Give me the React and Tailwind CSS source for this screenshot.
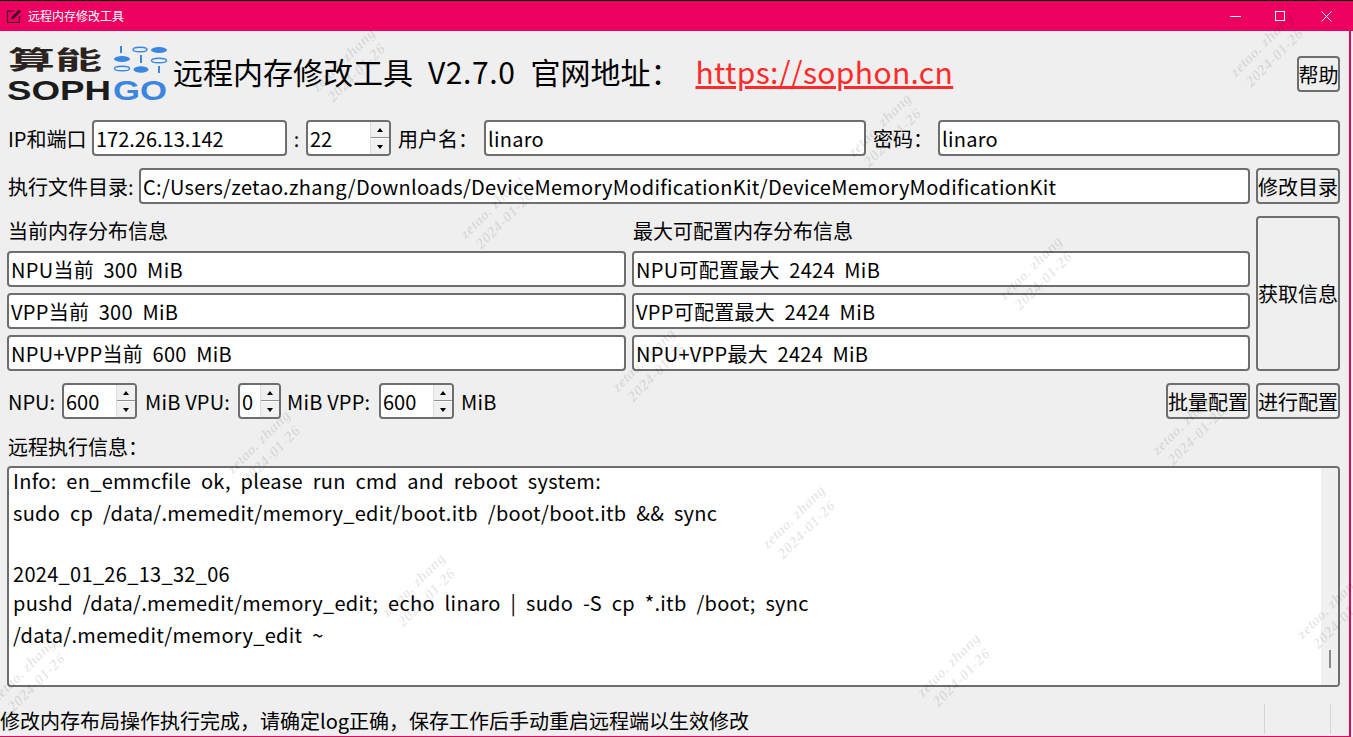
const font = { fontFamily: '"Noto Sans CJK SC", "Noto Sans", sans-serif' };
const logoFont = { fontFamily: '"Liberation Sans", sans-serif' };

const marks = [
  [350, 65], [886, 130], [1268, 50], [498, 212], [1037, 273], [650, 365], [265, 447],
  [1190, 428], [800, 522], [420, 590], [1335, 612], [955, 670], [30, 675],
];

function Watermark({ x, y }) {
  return (
    <div
      className="absolute pointer-events-none w-[100px] -rotate-45 text-center text-[15px] leading-[18px] tracking-[0.5px] font-bold italic text-black/[0.1] whitespace-nowrap"
      style={{ left: x - 50, top: y - 18, fontFamily: '"Liberation Serif", serif' }}
    >
      <div>zetao. zhang</div>
      <div>2024-01-26</div>
    </div>
  );
}

function Field({ children, className = "" }) {
  return (
    <div className={`h-[36px] flex items-center bg-white border-2 border-[#6e6e6e] rounded-[4px] pl-[2px] pt-[2px] text-[20px] whitespace-pre overflow-hidden ${className}`}>
      {children}
    </div>
  );
}

function Btn({ children, className = "" }) {
  return (
    <button className={`h-[36px] flex items-center justify-center bg-[#efefef] border-2 border-[#6e6e6e] rounded-[4px] pt-[1px] text-[20px] whitespace-nowrap ${className}`}>
      {children}
    </button>
  );
}

function Spin({ value, className = "" }) {
  return (
    <div className={`h-[36px] flex bg-white border-2 border-[#6e6e6e] rounded-[4px] text-[20px] overflow-hidden ${className}`}>
      <div className="flex-1 flex items-center pl-[2px] pt-[2px]">{value}</div>
      <div className="w-[19px] flex flex-col bg-[#f0f0f0] border-l border-[#dcdcdc]">
        <div className="flex-1 flex items-center justify-center border-b border-[#8f8f8f]">
          <div className="w-0 h-0 border-x-[3.5px] border-x-transparent border-b-[4px] border-b-black" />
        </div>
        <div className="flex-1 flex items-center justify-center border-t border-white">
          <div className="w-0 h-0 border-x-[3.5px] border-x-transparent border-t-[4px] border-t-black" />
        </div>
      </div>
    </div>
  );
}

function Logo() {
  return (
    <svg width="162" height="60" viewBox="0 0 162 60" className="shrink-0">
      <text x="1" y="24" fontSize="25" fontWeight="700" fill="#2a2320" textLength="94" lengthAdjust="spacingAndGlyphs" style={font}>算能</text>
      <g fill="#3b87e0">
        <rect x="113" y="1" width="2" height="7" />
        <ellipse cx="133" cy="4.5" rx="7" ry="2.3" fill="none" stroke="#3b87e0" strokeWidth="1.5" />
        <ellipse cx="152" cy="5" rx="8" ry="3" />
        <ellipse cx="115" cy="14" rx="8" ry="3" />
        <rect x="133" y="10" width="2" height="8" />
        <ellipse cx="152" cy="15.5" rx="7.5" ry="2.3" fill="none" stroke="#3b87e0" strokeWidth="1.5" />
        <ellipse cx="115" cy="23.5" rx="7.5" ry="2.3" fill="none" stroke="#3b87e0" strokeWidth="1.5" />
        <ellipse cx="134" cy="24.5" rx="7.5" ry="3.2" />
        <rect x="151" y="21" width="2" height="7" />
      </g>
      <text x="0" y="55" fontSize="28" fontWeight="700" fill="#1b1b1b" textLength="104" lengthAdjust="spacingAndGlyphs" style={logoFont}>SOPH</text>
      <text x="106" y="55" fontSize="28" fontWeight="700" fill="#3b87e0" textLength="54" lengthAdjust="spacingAndGlyphs" style={logoFont}>GO</text>
    </svg>
  );
}

export default function App() {
  return (
    <div className="relative w-[1353px] h-[737px] flex flex-col overflow-hidden bg-[#efefef] text-black border-t border-t-black" style={font}>
      <div className="h-[30px] shrink-0 flex items-center bg-[#ec0060] text-white text-[12px]">
        <svg width="16" height="16" viewBox="0 0 16 16" fill="none" className="ml-[6px] mr-[6px]">
          <path d="M13.5 8v5.5a1 1 0 0 1-1 1H2.5a1 1 0 0 1-1-1V4a1 1 0 0 1 1-1H8" stroke="#3a0a20" strokeWidth="1.2" />
          <path d="M5 11.5l1-3L13 1.5l2 2-7 7z" fill="#3a0a20" />
        </svg>
        <span>远程内存修改工具</span>
        <div className="ml-auto flex items-center">
          <svg width="11" height="11" viewBox="0 0 11 11" className="mr-[34px]" shapeRendering="crispEdges">
            <rect x="0" y="5" width="11" height="1" fill="#fff" />
          </svg>
          <svg width="11" height="11" viewBox="0 0 11 11" className="mr-[35px]" shapeRendering="crispEdges">
            <rect x="0.5" y="0.5" width="9" height="9" fill="none" stroke="#fff" />
          </svg>
          <svg width="11" height="11" viewBox="0 0 11 11" className="mr-[21px]">
            <path d="M0.5 0.5l10 10M10.5 0.5l-10 10" stroke="#fff" strokeWidth="1" />
          </svg>
        </div>
      </div>

      <div className="flex-1 flex flex-col w-[1351px] border-r-2 border-r-[#ec0060] border-b border-b-[#ec0060]">
        <div className="flex-1 flex flex-col pl-[7px] pr-[9px]">
          <div className="h-[89px] shrink-0 flex items-start">
            <div className="mt-[14px]"><Logo /></div>
            <span className="mt-[18px] ml-[4px] text-[30px] leading-[44px] whitespace-pre">远程内存修改工具</span>
            <span className="mt-[18px] ml-[15px] text-[30px] leading-[44px] tracking-[0.6px]">V2.7.0</span>
            <span className="mt-[18px] ml-[15px] text-[30px] leading-[44px] whitespace-pre">官网地址：</span>
            <span className="mt-[18px] ml-[15px] text-[30px] leading-[44px] tracking-[0.35px] text-[#ff2a2a] underline">https://sophon.cn</span>
            <Btn className="ml-auto mt-[25px] w-[43px]">帮助</Btn>
          </div>

          <div className="flex items-center h-[36px] text-[20px]">
            <span className="w-[85px] pl-[1px] pt-[2px] shrink-0">IP和端口</span>
            <Field className="w-[195px]">172.26.13.142</Field>
            <span className="w-[19px] pt-[2px] text-center">:</span>
            <Spin value="22" className="w-[85px]" />
            <span className="ml-[7px] w-[86px] pt-[2px]">用户名：</span>
            <Field className="w-[382px] tracking-[0.28px]">linaro</Field>
            <span className="ml-[7px] w-[65px] pt-[2px]">密码：</span>
            <Field className="flex-1 tracking-[0.28px]">linaro</Field>
          </div>

          <div className="flex items-center h-[36px] mt-[12px] text-[20px]">
            <span className="pl-[1px] pt-[2px] w-[132px] shrink-0">执行文件目录:</span>
            <Field className="w-[1111px] tracking-[0.28px]">C:/Users/zetao.zhang/Downloads/DeviceMemoryModificationKit/DeviceMemoryModificationKit</Field>
            <Btn className="ml-[6px] flex-1">修改目录</Btn>
          </div>

          <div className="flex gap-[6px] mt-[12px] h-[155px]">
            <div className="w-[619px] flex flex-col">
              <div className="h-[28px] pt-[2px] flex items-center text-[20px] pl-[1px]">当前内存分布信息</div>
              <div className="mt-[7px] flex flex-col gap-[6px]">
                <Field className="tracking-[0.28px]">NPU当前  300  MiB</Field>
                <Field className="tracking-[0.28px]">VPP当前  300  MiB</Field>
                <Field className="tracking-[0.28px]">NPU+VPP当前  600  MiB</Field>
              </div>
            </div>
            <div className="w-[618px] flex flex-col">
              <div className="h-[28px] pt-[2px] flex items-center text-[20px] pl-[1px]">最大可配置内存分布信息</div>
              <div className="mt-[7px] flex flex-col gap-[6px]">
                <Field className="tracking-[0.28px]">NPU可配置最大  2424  MiB</Field>
                <Field className="tracking-[0.28px]">VPP可配置最大  2424  MiB</Field>
                <Field className="tracking-[0.28px]">NPU+VPP最大  2424  MiB</Field>
              </div>
            </div>
            <Btn className="flex-1 h-[155px]">获取信息</Btn>
          </div>

          <div className="flex items-center h-[36px] mt-[12px] text-[20px]">
            <span className="pl-[1px] pt-[2px] w-[55px]">NPU:</span>
            <Spin value="600" className="w-[75px]" />
            <span className="ml-[8px] pt-[2px] w-[93px] tracking-[0.2px] whitespace-pre">MiB VPU:</span>
            <Spin value="0" className="w-[43px]" />
            <span className="ml-[6px] pt-[2px] w-[92px] tracking-[0.2px] whitespace-pre">MiB VPP:</span>
            <Spin value="600" className="w-[75px]" />
            <span className="ml-[7px] pt-[2px] tracking-[0.2px]">MiB</span>
            <Btn className="ml-auto w-[84px]">批量配置</Btn>
            <Btn className="ml-[6px] w-[84px]">进行配置</Btn>
          </div>

          <div className="h-[47px] pt-[8px] flex items-center text-[20px] pl-[1px]">远程执行信息：</div>

          <div className="h-[221px] flex bg-white border-2 border-[#6e6e6e] rounded-[4px] overflow-hidden">
            <div className="flex-1 pl-[4px] -mt-[3px] text-[20px] leading-[31px] whitespace-pre tracking-[0.3px] [word-spacing:5px]">
              <div>Info: en_emmcfile ok, please run cmd and reboot system:</div>
              <div className="mt-[1px]">sudo cp /data/.memedit/memory_edit/boot.itb /boot/boot.itb && sync</div>
              <div className="h-[30px]" />
              <div>2024_01_26_13_32_06</div>
              <div className="-mt-[2px]">pushd /data/.memedit/memory_edit; echo linaro | sudo -S cp *.itb /boot; sync</div>
              <div className="mt-[1px]">/data/.memedit/memory_edit ~</div>
            </div>
            <div className="w-[17px] bg-[#f0f0f0] flex justify-center">
              <div className="mt-[182px] w-[2px] h-[18px] bg-[#8a8a8a]" />
            </div>
          </div>
        </div>

        <div className="h-[36px] pt-[6px] shrink-0 flex items-center text-[20px] relative">
          <span className="whitespace-pre">修改内存布局操作执行完成，请确定log正确，保存工作后手动重启远程端以生效修改</span>
          <div className="absolute left-[1264px] bottom-[2px] w-px h-[30px] bg-[#d4d4d4]" />
          <div className="absolute left-[1330px] bottom-[2px] w-px h-[30px] bg-[#d4d4d4]" />
        </div>
      </div>

      {marks.map(([x, y]) => (
        <Watermark key={`${x}-${y}`} x={x} y={y} />
      ))}
    </div>
  );
}
